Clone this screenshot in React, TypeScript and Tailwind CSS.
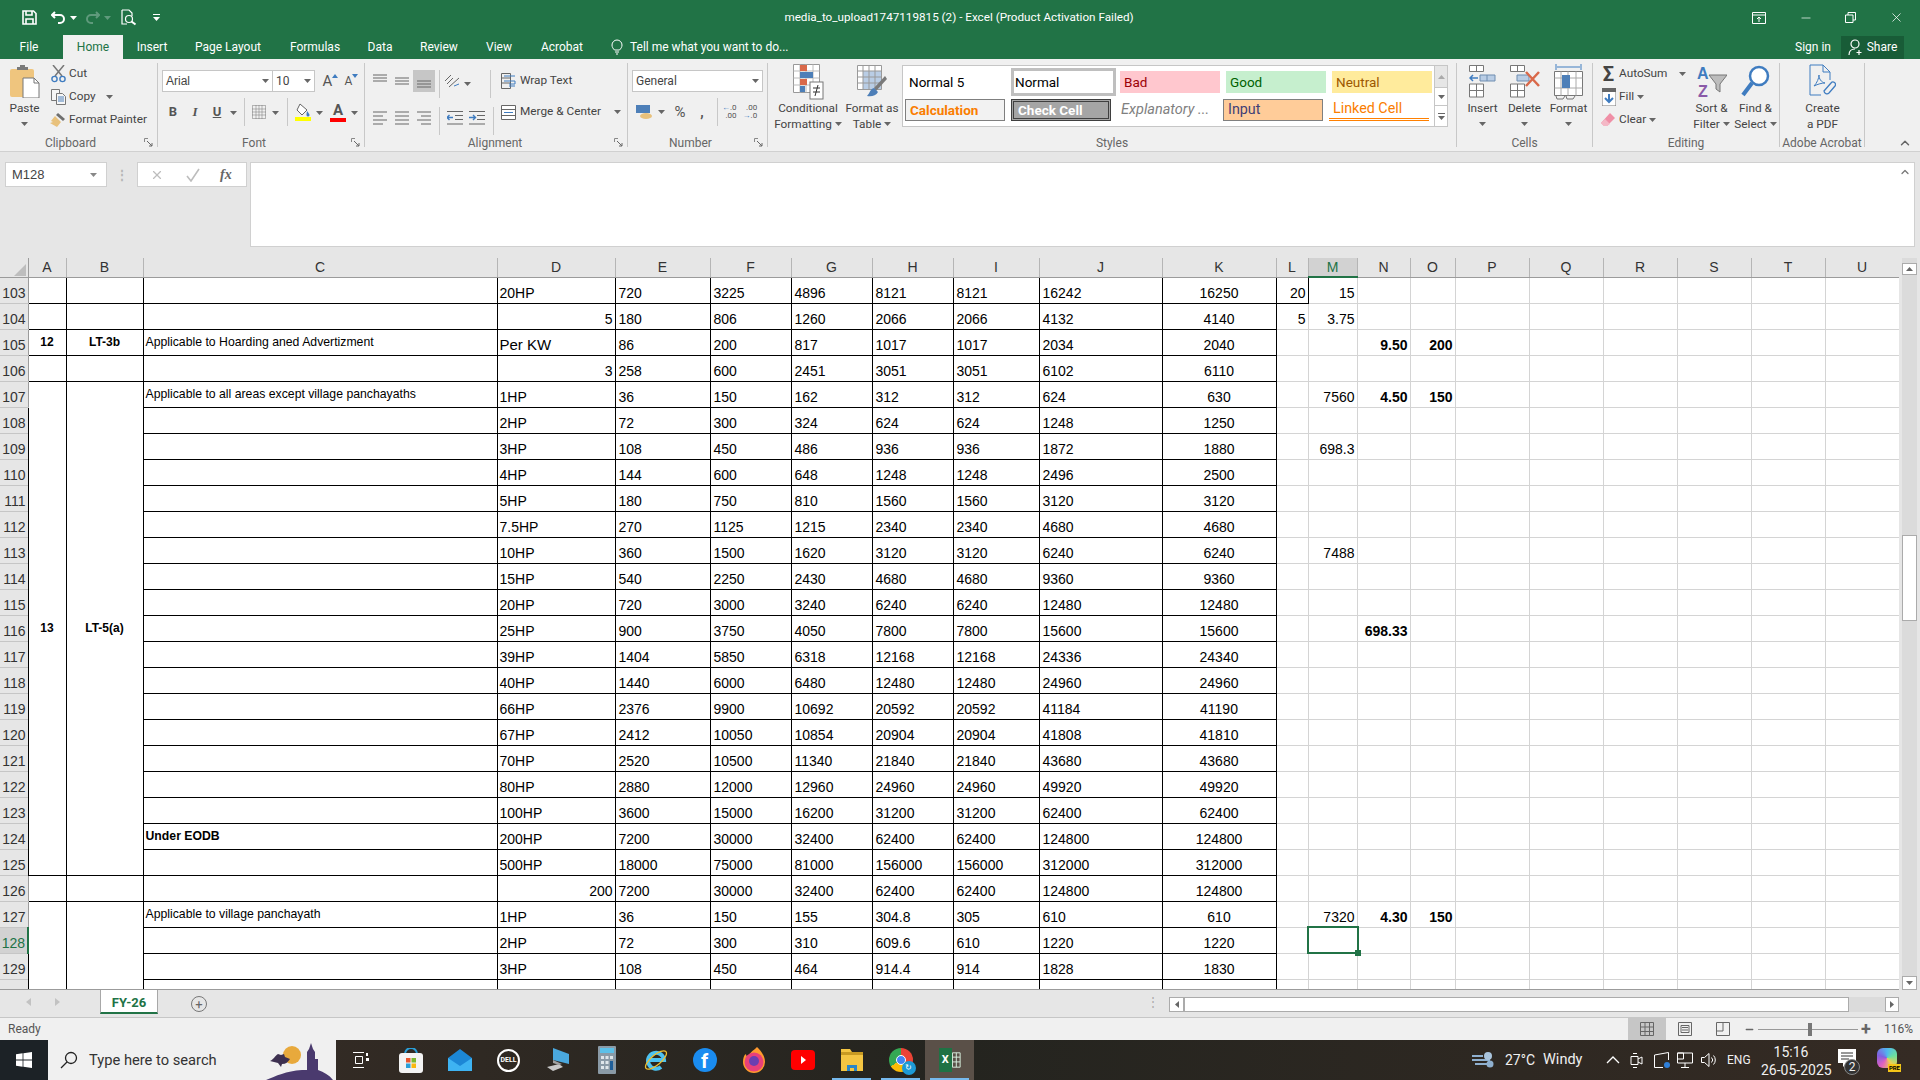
import { ReactNode } from "react";
import { ChevronUp, X, Minus } from "lucide-react";

type Row = { n: number; v: (string | number)[]; right?: boolean; perKw?: boolean };

const colW = [
  "w-[28px]", "w-[38px]", "w-[77px]", "w-[354px]", "w-[118px]", "w-[95px]", "w-[81px]", "w-[81px]",
  "w-[81px]", "w-[86px]", "w-[123px]", "w-[114px]", "w-[32px]", "w-[49px]", "w-[53px]", "w-[45px]",
  "w-[74px]", "w-[74px]", "w-[74px]", "w-[74px]", "w-[74px]", "w-[74px]",
];
const colNames = ["A", "B", "C", "D", "E", "F", "G", "H", "I", "J", "K", "L", "M", "N", "O", "P", "Q", "R", "S", "T", "U"];

const rows: Row[] = [
  { n: 103, v: ["20HP", 720, 3225, 4896, 8121, 8121, 16242, 16250, 20, 15] },
  { n: 104, v: [5, 180, 806, 1260, 2066, 2066, 4132, 4140, 5, "3.75"], right: true },
  { n: 105, v: ["Per KW", 86, 200, 817, 1017, 1017, 2034, 2040, "", "", "9.50", 200], perKw: true },
  { n: 106, v: [3, 258, 600, 2451, 3051, 3051, 6102, 6110], right: true },
  { n: 107, v: ["1HP", 36, 150, 162, 312, 312, 624, 630, "", 7560, "4.50", 150] },
  { n: 108, v: ["2HP", 72, 300, 324, 624, 624, 1248, 1250] },
  { n: 109, v: ["3HP", 108, 450, 486, 936, 936, 1872, 1880, "", "698.3"] },
  { n: 110, v: ["4HP", 144, 600, 648, 1248, 1248, 2496, 2500] },
  { n: 111, v: ["5HP", 180, 750, 810, 1560, 1560, 3120, 3120] },
  { n: 112, v: ["7.5HP", 270, 1125, 1215, 2340, 2340, 4680, 4680] },
  { n: 113, v: ["10HP", 360, 1500, 1620, 3120, 3120, 6240, 6240, "", 7488] },
  { n: 114, v: ["15HP", 540, 2250, 2430, 4680, 4680, 9360, 9360] },
  { n: 115, v: ["20HP", 720, 3000, 3240, 6240, 6240, 12480, 12480] },
  { n: 116, v: ["25HP", 900, 3750, 4050, 7800, 7800, 15600, 15600, "", "", "698.33"] },
  { n: 117, v: ["39HP", 1404, 5850, 6318, 12168, 12168, 24336, 24340] },
  { n: 118, v: ["40HP", 1440, 6000, 6480, 12480, 12480, 24960, 24960] },
  { n: 119, v: ["66HP", 2376, 9900, 10692, 20592, 20592, 41184, 41190] },
  { n: 120, v: ["67HP", 2412, 10050, 10854, 20904, 20904, 41808, 41810] },
  { n: 121, v: ["70HP", 2520, 10500, 11340, 21840, 21840, 43680, 43680] },
  { n: 122, v: ["80HP", 2880, 12000, 12960, 24960, 24960, 49920, 49920] },
  { n: 123, v: ["100HP", 3600, 15000, 16200, 31200, 31200, 62400, 62400] },
  { n: 124, v: ["200HP", 7200, 30000, 32400, 62400, 62400, 124800, 124800] },
  { n: 125, v: ["500HP", 18000, 75000, 81000, 156000, 156000, 312000, 312000] },
  { n: 126, v: [200, 7200, 30000, 32400, 62400, 62400, 124800, 124800], right: true },
  { n: 127, v: ["1HP", 36, 150, 155, "304.8", 305, 610, 610, "", 7320, "4.30", 150] },
  { n: 128, v: ["2HP", 72, 300, 310, "609.6", 610, 1220, 1220] },
  { n: 129, v: ["3HP", 108, 450, 464, "914.4", 914, 1828, 1830] },
  { n: 130, v: ["4HP", 144, 600, 619, "1219.2", 1219, 2438, 2440] },
];

const cText: Record<number, ReactNode> = {
  105: "Applicable to Hoarding aned Advertizment",
  107: "Applicable to all areas except village panchayaths",
  124: <b>Under EODB</b>,
  127: "Applicable to village panchayath",
};

const arial = "[font-family:'Liberation_Sans',sans-serif]";
const times = "[font-family:'Liberation_Serif',serif]";

const Caret = ({ c = "#666" }: { c?: string }) => (
  <svg width="7" height="4" viewBox="0 0 7 4" className="inline-block shrink-0">
    <path d="M0 0h7L3.5 4z" fill={c} />
  </svg>
);

const Launcher = () => (
  <svg width="9" height="9" viewBox="0 0 9 9" className="absolute right-[4px] bottom-[0px]">
    <path d="M.5 4V.5H4" fill="none" stroke="#888" />
    <path d="M3 3l5 5M8 5v3H5" fill="none" stroke="#666" />
  </svg>
);

const Group = ({ w, label, labelPad = "", launcher, children }: { w: string; label: string; labelPad?: string; launcher?: boolean; children: ReactNode }) => (
  <div className={`relative flex h-[84px] shrink-0 flex-col border-r border-[#c8c8c8] ${w}`}>
    <div className="flex h-[72px]">{children}</div>
    <div className={`h-[12px] text-center text-[12px] leading-[16px] text-[#666] ${labelPad}`}>{label}</div>
    {launcher && <Launcher />}
  </div>
);

const BigBtn = ({ w, icon, lines, caret }: { w: string; icon: ReactNode; lines: string[]; caret?: "inline" | "below" }) => (
  <div className={`flex shrink-0 flex-col items-center text-[11.8px] leading-[16px] text-[#444] ${w}`}>
    <div className="flex h-[37px] items-center justify-center">{icon}</div>
    {lines.map((l, i) => (
      <div key={l} className="flex items-center gap-[3px] whitespace-nowrap">
        {l}
        {caret === "inline" && i === lines.length - 1 && <Caret />}
      </div>
    ))}
    {caret === "below" && (
      <div className="flex h-[16px] items-center">
        <Caret />
      </div>
    )}
  </div>
);

const Lines = ({ rows: r }: { rows: [number, number][] }) => (
  <svg width="14" height="14" viewBox="0 0 14 14">
    {r.map(([y, x2], i) => (
      <line key={i} x1={x2 < 0 ? -x2 : 0} x2={x2 < 0 ? 14 : x2} y1={y} y2={y} stroke="#666" />
    ))}
  </svg>
);

const IconBtn = ({ w = "w-[22px]", active, children }: { w?: string; active?: boolean; children: ReactNode }) => (
  <div className={`flex h-[22px] shrink-0 items-center justify-center ${w} ${active ? "bg-[#c6c6c6]" : ""}`}>
    {children}
  </div>
);

const Sep = () => <div className="mx-[4px] h-[28px] w-px shrink-0 bg-[#c8c8c8]" />;

const Tab = ({ w, t, active }: { w: string; t: string; active?: boolean }) => (
  <div className={`flex h-[24px] items-center justify-center whitespace-nowrap text-[12px] ${w} ${active ? "bg-[#f0f0f0] text-[#217346]" : "text-white"}`}>
    {t}
  </div>
);

const Qat = () => (
  <div className="flex w-[200px] items-center pl-[22px] text-white">
    <svg width="15" height="15" viewBox="0 0 15 15" fill="none" stroke="#fff" strokeWidth="1.6">
      <path d="M1 1h10.5L14 3.5V14H1z" />
      <path d="M4 1v4h6V1M4 14V9h7v5" />
    </svg>
    <svg width="15" height="14" viewBox="0 0 15 14" fill="none" stroke="#fff" strokeWidth="2" className="ml-[14px]">
      <path d="M4 1L1 4l3 3M1 4h8a4 4 0 0 1 0 8H7" />
    </svg>
    <div className="ml-[4px]"><Caret c="#fff" /></div>
    <svg width="15" height="14" viewBox="0 0 15 14" fill="none" stroke="#5f9a7c" strokeWidth="2" className="ml-[8px]">
      <path d="M11 1l3 3-3 3M14 4H6a4 4 0 0 0 0 8h2" />
    </svg>
    <div className="ml-[4px]"><Caret c="#5f9a7c" /></div>
    <svg width="16" height="17" viewBox="0 0 16 17" fill="none" stroke="#fff" className="ml-[10px]" strokeWidth="1.2">
      <path d="M1 1h7l3 3v3M6 15H1V1" />
      <circle cx="8" cy="10" r="3.5" />
      <path d="M10.5 12.5l4 3" strokeWidth="2" />
    </svg>
    <svg width="7" height="7" viewBox="0 0 7 7" className="ml-[16px]">
      <path d="M0 0h7v1H0zM0 3h7L3.5 7z" fill="#fff" />
    </svg>
  </div>
);

const PasteIcon = () => (
  <svg width="30" height="33" viewBox="0 0 30 33">
    <rect x="0" y="4" width="24" height="28" rx="2" fill="#efc57e" />
    <path d="M7 5V2h3V0h5v2h3v3z" fill="#7a7a7a" />
    <path d="M13 13h11l5 5v15H13z" fill="#fff" stroke="#777" />
    <path d="M24 13v5h5" fill="none" stroke="#777" />
  </svg>
);
const CutIcon = () => (
  <svg width="15" height="18" viewBox="0 0 15 18" fill="none">
    <path d="M2 0l9 11M13 0L4 11" stroke="#777" strokeWidth="1.5" />
    <circle cx="3.5" cy="14" r="2.6" stroke="#3f7cc0" strokeWidth="1.4" />
    <circle cx="11.5" cy="14" r="2.6" stroke="#3f7cc0" strokeWidth="1.4" />
  </svg>
);
const CopyIcon = () => (
  <svg width="16" height="16" viewBox="0 0 16 16" fill="#f6f6f6" stroke="#777">
    <path d="M.5.5h8v11h-8z" />
    <path d="M5.5 4.5h6l3 3v8h-9z" />
    <path d="M7 8h6M7 10h6M7 12h6" stroke="#4d7fb8" />
  </svg>
);
const PainterIcon = () => (
  <svg width="17" height="17" viewBox="0 0 17 17">
    <path d="M8 2l7 6-2 2-7-6z" fill="#6f6f6f" />
    <path d="M5 5l6 6-4 5-7-4 3-1-2-1z" fill="#e8c17c" />
  </svg>
);
const GridIcon = () => (
  <svg width="14" height="14" viewBox="0 0 14 14" fill="none" stroke="#777" strokeDasharray="1 1">
    <path d="M.5.5h13v13H.5zM.5 7h13M7 .5v13M4 .5v13M10 .5v13M.5 4h13M.5 10h13" />
  </svg>
);
const FillIcon = () => (
  <svg width="16" height="19" viewBox="0 0 16 19">
    <path d="M5 1l7 6-5 5-5-5z" fill="#fff" stroke="#666" />
    <path d="M12 8c1.5 2 2.5 3 2.5 4a1.5 1.5 0 0 1-3 0c0-1 .2-2 .5-4z" fill="#3f7cc0" />
    <rect x="0" y="14" width="16" height="4" fill="#ffff00" />
  </svg>
);
const OrientIcon = () => (
  <svg width="16" height="14" viewBox="0 0 16 14" fill="none" stroke="#666">
    <path d="M1 7l6-6M3 10l6-6M5 13L15 4" />
    <path d="M10 12l5-2" stroke="#3f7cc0" />
  </svg>
);
const WrapIcon = () => (
  <svg width="15" height="16" viewBox="0 0 15 16" fill="none" stroke="#666">
    <path d="M.5.5h9v15h-9zM.5 5h9M.5 10h9" />
    <path d="M3 3h11M3 8h11v3H8M8 13h6" stroke="#3f7cc0" />
  </svg>
);
const MergeIcon = () => (
  <svg width="15" height="15" viewBox="0 0 15 15" fill="#fff" stroke="#666">
    <path d="M.5.5h14v14H.5zM.5 4.5h14M.5 10.5h14" />
    <path d="M3 7.5h9" stroke="#3f7cc0" />
  </svg>
);
const IndentIcon = ({ flip }: { flip?: boolean }) => (
  <svg width="16" height="14" viewBox="0 0 16 14" fill="none" stroke="#666">
    <path d="M0 .5h16M8 4.5h8M8 8.5h8M0 13h16" />
    {flip ? <path d="M0 6.5h6M4 4l2.5 2.5L4 9" stroke="#3f7cc0" strokeWidth="1.4" /> : <path d="M6 6.5H0M2.5 4L0 6.5 2.5 9" stroke="#3f7cc0" strokeWidth="1.4" />}
  </svg>
);
const CondIcon = () => (
  <svg width="31" height="36" viewBox="0 0 31 36">
    <path d="M.5.5h26v28H.5z" fill="#fff" stroke="#999" />
    <path d="M.5 7h26M.5 14h26M.5 21h26M7 .5v28M13 .5v28M20 .5v28" stroke="#bbb" />
    <rect x="7" y="1" width="7" height="6" fill="#d9694a" />
    <rect x="7" y="8" width="13" height="6" fill="#4d7fb8" />
    <rect x="7" y="15" width="7" height="6" fill="#d9694a" />
    <rect x="7" y="22" width="5" height="6" fill="#4d7fb8" />
    <rect x="17" y="18" width="13" height="17" fill="#fff" stroke="#777" />
    <path d="M20 24h7M20 28h7M25 21l-3 11" stroke="#333" fill="none" />
  </svg>
);
const TableIcon = () => (
  <svg width="30" height="34" viewBox="0 0 30 34">
    <path d="M.5.5h24v24H.5z" fill="#fff" stroke="#999" />
    <rect x="6" y="6" width="18" height="18" fill="#b9cde5" />
    <path d="M.5 6h24M.5 12h24M.5 18h24M6 .5v24M12 .5v24M18 .5v24" stroke="#999" />
    <path d="M28 11L17 23l2 3 11-12z" fill="#7a7a7a" />
    <path d="M17 23c-4 1-4 5-7 8 4 1 9 0 11-4z" fill="#4d7fb8" />
  </svg>
);
const InsertIcon = () => (
  <svg width="27" height="33" viewBox="0 0 27 33" fill="#fff" stroke="#777">
    <path d="M.5.5h14v6H.5zM7.5.5v6M.5 19h14v13H.5zM7.5 19v13M.5 25.5h14" />
    <path d="M11 10h15v6H11z" fill="#b9cde5" stroke="#6f8db0" />
    <path d="M18 10v6" stroke="#6f8db0" />
    <path d="M9 13H1M4 10l-3 3 3 3" fill="none" stroke="#3f7cc0" strokeWidth="1.5" />
  </svg>
);
const DeleteIcon = () => (
  <svg width="30" height="33" viewBox="0 0 30 33" fill="#fff" stroke="#777">
    <path d="M.5.5h14v6H.5zM7.5.5v6M.5 19h14v13H.5zM7.5 19v13M.5 25.5h14" />
    <path d="M7 10h12v6H7z" fill="#b9cde5" stroke="#6f8db0" />
    <path d="M16 7l13 14M29 7L16 21" stroke="#d9694a" strokeWidth="2.5" fill="none" />
  </svg>
);
const FormatIcon = () => (
  <svg width="29" height="36" viewBox="0 0 29 36" fill="none" stroke="#777">
    <path d="M2 0v6M27 0v6M3 3h23" stroke="#3f7cc0" />
    <path d="M.5 7.5h28v24H.5z" fill="#fff" />
    <path d="M.5 14h28M.5 24h28M7 7.5v24M14 7.5v24M22 7.5v24" stroke="#aaa" />
    <rect x="8" y="11" width="8" height="13" fill="#4d7fb8" stroke="none" />
    <path d="M2 32l1 3h6l2-3M12 32l1 3h6l2-3" />
  </svg>
);
const SortIcon = () => (
  <svg width="30" height="34" viewBox="0 0 30 34">
    <path d="M12 10h18l-7 9v8l-4-3v-5z" fill="#bdbdbd" stroke="#777" />
    <text x="0" y="14" fontSize="16" fontWeight="700" fill="#3f7cc0" fontFamily="Liberation Sans, sans-serif">A</text>
    <text x="1" y="32" fontSize="16" fontWeight="700" fill="#8a5aa8" fontFamily="Liberation Sans, sans-serif">Z</text>
  </svg>
);
const FindIcon = () => (
  <svg width="29" height="33" viewBox="0 0 29 33" fill="none">
    <circle cx="18" cy="11" r="9" stroke="#3f7cc0" strokeWidth="2.5" fill="#fff" />
    <path d="M11 18L2 30" stroke="#3f7cc0" strokeWidth="4" />
  </svg>
);
const PdfIcon = () => (
  <svg width="27" height="35" viewBox="0 0 27 35" fill="none" stroke="#3f7cc0">
    <path d="M1 1h13l7 7v8M1 1v30h11M14 1v7h7" />
    <path d="M5 22c3-3 5-8 5-11 0 4 2 7 6 8-3 0-7 1-11 3z" />
    <path d="M15 27l7-8a2.5 2.5 0 0 1 4 3l-6 7a3 3 0 0 1-5-2z" strokeWidth="1.3" />
  </svg>
);

const SmallCmd = ({ icon, t, caret, gap = "ml-[3px]" }: { icon: ReactNode; t: string; caret?: boolean; gap?: string }) => (
  <div className="flex h-[23px] items-center whitespace-nowrap text-[11.8px] text-[#444]">
    <div className="flex w-[19px] shrink-0 items-center justify-center">{icon}</div>
    <span className="ml-[1px]">{t}</span>
    {caret && <span className={`flex ${gap}`}><Caret /></span>}
  </div>
);

const StyleCell = ({ className, size = "text-[13.5px]", children }: { className: string; size?: string; children: ReactNode }) => (
  <div className={`flex h-[22px] w-[100px] shrink-0 items-center overflow-hidden whitespace-nowrap pl-[4px] ${size} ${className}`}>{children}</div>
);

const Ribbon = () => (
  <div className="flex h-[93px] shrink-0 border-b border-[#d0d0d0] bg-[#f0f0f0] pt-[4px]">
    <Group w="w-[158px]" label="Clipboard" labelPad="pr-[16px]" launcher>
      <div className="w-[49px] pl-[1px]">
        <BigBtn w="w-[47px]" icon={<PasteIcon />} lines={["Paste"]} caret="below" />
      </div>
      <div className="-mt-[1px] flex flex-col">
        <SmallCmd icon={<CutIcon />} t="Cut" />
        <SmallCmd icon={<CopyIcon />} t="Copy" caret gap="ml-[10px]" />
        <SmallCmd icon={<PainterIcon />} t="Format Painter" />
      </div>
    </Group>

    <Group w="w-[207px]" label="Font" labelPad="pr-[14px]" launcher>
      <div className="flex flex-col gap-[9px] pl-[4px] pt-[7px]">
        <div className="flex">
          <div className={`flex h-[22px] w-[111px] items-center justify-between border border-[#c6c6c6] bg-white px-[3px] text-[12px] text-[#444] ${arial}`}>
            Arial <Caret />
          </div>
          <div className="flex h-[22px] w-[42px] items-center justify-between border border-l-0 border-[#c6c6c6] bg-white px-[3px] text-[12px] text-[#444]">
            10 <Caret />
          </div>
          <div className="ml-[5px] flex h-[22px] w-[21px] items-center justify-center text-[15px] text-[#555]">
            A<svg width="6" height="4" viewBox="0 0 6 4" className="mb-[10px]"><path d="M0 4h6L3 0z" fill="#3f7cc0" /></svg>
          </div>
          <div className="flex h-[22px] w-[21px] items-center justify-center text-[12px] text-[#555]">
            A<svg width="6" height="4" viewBox="0 0 6 4" className="mb-[10px]"><path d="M0 0h6L3 4z" fill="#3f7cc0" /></svg>
          </div>
        </div>
        <div className="flex h-[22px] items-center text-[13px] text-[#555]">
          <IconBtn><b>B</b></IconBtn>
          <IconBtn><i className={times}><b>I</b></i></IconBtn>
          <IconBtn><b className="underline">U</b></IconBtn>
          <div className="ml-[2px]"><Caret /></div>
          <div className="ml-[3px]"><Sep /></div>
          <IconBtn w="w-[20px]"><GridIcon /></IconBtn>
          <div className="ml-[3px]"><Caret /></div>
          <div className="ml-[4px]"><Sep /></div>
          <IconBtn><FillIcon /></IconBtn>
          <div className="ml-[2px]"><Caret /></div>
          <div className="ml-[6px] flex h-[22px] w-[18px] flex-col items-center justify-center">
            <b className="text-[15px] leading-[15px]">A</b>
            <div className="h-[4px] w-[16px] bg-[#ff0000]" />
          </div>
          <div className="ml-[4px]"><Caret /></div>
        </div>
      </div>
    </Group>

    <Group w="w-[263px]" label="Alignment" labelPad="pr-[2px]" launcher>
      <div className="flex pl-[4px] pt-[7px]">
        <div className="flex flex-col gap-[9px]">
          <div className="flex">
            <IconBtn><Lines rows={[[1, 14], [4, 14], [7, 14]]} /></IconBtn>
            <IconBtn><Lines rows={[[4, 14], [7, 14], [10, 14]]} /></IconBtn>
            <IconBtn active><Lines rows={[[7, 14], [10, 14], [13, 14]]} /></IconBtn>
            <Sep />
            <IconBtn w="w-[16px]"><OrientIcon /></IconBtn>
            <div className="flex items-center pl-[4px]"><Caret /></div>
            <div className="ml-[15px]"><Sep /></div>
          </div>
          <div className="flex">
            <IconBtn><Lines rows={[[1, 14], [5, 10], [9, 14], [13, 10]]} /></IconBtn>
            <IconBtn><Lines rows={[[1, 14], [5, 14], [9, 14], [13, 14]]} /></IconBtn>
            <IconBtn><Lines rows={[[1, 14], [5, -4], [9, 14], [13, -4]]} /></IconBtn>
            <Sep />
            <IconBtn><IndentIcon /></IconBtn>
            <IconBtn><IndentIcon flip /></IconBtn>
            <div className="ml-[1px]"><Sep /></div>
          </div>
        </div>
        <div className="flex flex-col gap-[9px] pl-[3px] text-[11.8px] text-[#444]">
          <div className="flex h-[22px] items-center gap-[4px]"><WrapIcon />Wrap Text</div>
          <div className="flex h-[22px] items-center gap-[4px]"><MergeIcon />Merge &amp; Center<span className="ml-[9px] flex"><Caret /></span></div>
        </div>
      </div>
    </Group>

    <Group w="w-[140px]" label="Number" labelPad="pr-[14px]" launcher>
      <div className="flex flex-col gap-[9px] pl-[4px] pt-[7px]">
        <div className="flex h-[22px] w-[131px] items-center justify-between border border-[#c6c6c6] bg-white px-[3px] text-[12px] text-[#444]">
          General <Caret />
        </div>
        <div className="flex h-[22px] items-center text-[#555]">
          <div className="flex w-[26px] justify-center">
            <svg width="18" height="15" viewBox="0 0 18 15"><rect width="14" height="8" fill="#4d7fb8" /><ellipse cx="10" cy="11" rx="6" ry="3" fill="#e8c17c" /></svg>
          </div>
          <Caret />
          <div className="w-[30px] text-center text-[15px]">%</div>
          <b className="w-[14px] text-center text-[14px]">,</b>
          <div className="ml-[4px]"><Sep /></div>
          <div className="flex gap-[6px] text-[8px] leading-[8px] text-[#555]">
            <div className="text-right"><span className="text-[#3f7cc0]">←</span>.0<br />.00</div>
            <div className="text-right">.00<br /><span className="text-[#3f7cc0]">→</span>.0</div>
          </div>
        </div>
      </div>
    </Group>

    <Group w="w-[689px]" label="Styles">
      <div className="ml-[7px]"><BigBtn w="w-[66px]" icon={<CondIcon />} lines={["Conditional", "Formatting"]} caret="inline" /></div>
      <div className="ml-[1px]"><BigBtn w="w-[60px]" icon={<TableIcon />} lines={["Format as", "Table"]} caret="inline" /></div>
      <div className="mt-[2px] flex h-[62px] w-[546px] border border-[#c6c6c6] bg-white">
        <div className="flex w-[532px] flex-col gap-[6px] pl-[2px] pt-[5px]">
          <div className="flex gap-[6px]">
            <StyleCell className="text-black">Normal 5</StyleCell>
            <div className="-mb-[3px] -mt-[3px] flex h-[28px] w-[105px] shrink-0 items-center border-[3px] border-[#bfbfbf] pl-[1px] text-[13.5px] text-black">Normal</div>
            <StyleCell className="-ml-[2px] bg-[#ffc7ce] text-[#9c0006]">Bad</StyleCell>
            <StyleCell className="bg-[#c6efce] text-[#006100]">Good</StyleCell>
            <StyleCell className="bg-[#ffeb9c] text-[#9c5700]">Neutral</StyleCell>
          </div>
          <div className="flex gap-[6px]">
            <StyleCell className="border border-[#7f7f7f] bg-[#f2f2f2] font-bold text-[#fa7d00]">Calculation</StyleCell>
            <StyleCell className="border-[3px] border-double border-[#3f3f3f] bg-[#a5a5a5] font-bold text-white">Check Cell</StyleCell>
            <StyleCell size="text-[14.5px]" className="italic text-[#7f7f7f]">Explanatory ...</StyleCell>
            <StyleCell size="text-[14.3px]" className="border border-[#7f7f7f] bg-[#ffcc99] text-[#3f3f76]">Input</StyleCell>
            <StyleCell size="text-[14.3px]" className="border-b-[3px] border-double border-[#ff8001] text-[#fa7d00]">Linked Cell</StyleCell>
          </div>
        </div>
        <div className="flex w-[13px] flex-col border-l border-[#c6c6c6]">
          <div className="flex h-[21px] items-center justify-center bg-[#e6e6e6]"><svg width="7" height="4" viewBox="0 0 7 4"><path d="M0 4h7L3.5 0z" fill="#aaa" /></svg></div>
          <div className="flex h-[19px] items-center justify-center border-y border-[#c6c6c6]"><Caret /></div>
          <div className="flex flex-1 items-center justify-center"><svg width="7" height="7" viewBox="0 0 7 7"><path d="M0 0h7v1H0zM0 3h7L3.5 7z" fill="#666" /></svg></div>
        </div>
      </div>
    </Group>

    <Group w="w-[136px]" label="Cells">
      <div className="ml-[4px]"><BigBtn w="w-[43px]" icon={<InsertIcon />} lines={["Insert"]} caret="below" /></div>
      <BigBtn w="w-[41px]" icon={<DeleteIcon />} lines={["Delete"]} caret="below" />
      <div className="ml-[2px]"><BigBtn w="w-[43px]" icon={<FormatIcon />} lines={["Format"]} caret="below" /></div>
    </Group>

    <Group w="w-[187px]" label="Editing">
      <div className="-mt-[1px] flex w-[95px] flex-col pl-[6px]">
        <SmallCmd
          icon={<span className="text-[20px] font-bold leading-[20px] text-[#444]">Σ</span>}
          t="AutoSum"
          caret
          gap="ml-[12px]"
        />
        <SmallCmd
          icon={<svg width="14" height="18" viewBox="0 0 14 18"><rect width="14" height="18" fill="#fff" stroke="#777" /><rect width="14" height="4" fill="#666" /><path d="M7 6v8M3 10l4 4 4-4" stroke="#3f7cc0" strokeWidth="2" fill="none" /></svg>}
          t="Fill"
          caret
        />
        <SmallCmd
          icon={<svg width="15" height="15" viewBox="0 0 15 15"><path d="M9 1l5 5-8 8H3L0 11z" fill="#ef8fa6" /><path d="M0 11l4-4 5 5-3 2H3z" fill="#f4b8c6" /></svg>}
          t="Clear"
          caret
        />
      </div>
      <div className="ml-[3px]"><BigBtn w="w-[41px]" icon={<SortIcon />} lines={["Sort &", "Filter"]} caret="inline" /></div>
      <div className="ml-[2px]"><BigBtn w="w-[43px]" icon={<FindIcon />} lines={["Find &", "Select"]} caret="inline" /></div>
    </Group>

    <Group w="w-[85px]" label="Adobe Acrobat">
      <BigBtn w="w-[85px]" icon={<PdfIcon />} lines={["Create", "a PDF"]} />
    </Group>

    <div className="flex flex-1 items-end justify-end pb-[1px] pr-[8px]">
      <ChevronUp size={14} strokeWidth={2.5} color="#666" />
    </div>
  </div>
);

const FormulaBar = () => (
  <div className="flex h-[106px] shrink-0 bg-[#e6e6e6] pl-[5px] pt-[10px]">
    <div className={`flex h-[25px] w-[102px] items-center justify-between border border-[#d0d0d0] bg-white pl-[6px] pr-[9px] text-[13px] text-[#444] ${arial}`}>
      M128 <Caret c="#888" />
    </div>
    <div className="flex h-[25px] w-[30px] items-center justify-center text-[12px] font-bold tracking-tighter text-[#b5b5b5]">⋮</div>
    <div className="flex h-[25px] w-[110px] items-center border border-[#d0d0d0] bg-white pl-[12px] text-[#bdbdbd]">
      <X size={14} />
      <svg width="14" height="14" viewBox="0 0 14 14" className="ml-[22px]" fill="none" stroke="#bdbdbd" strokeWidth="1.6"><path d="M1 8l4 5 8-12" /></svg>
      <i className={`ml-[20px] text-[14px] font-bold text-[#666] ${times}`}>fx</i>
    </div>
    <div className="ml-[3px] flex h-[85px] w-[1665px] justify-end border border-[#d0d0d0] bg-white pr-[3px] pt-[3px]">
      <ChevronUp size={12} color="#777" strokeWidth={2.5} />
    </div>
  </div>
);

const SheetRow = ({ r }: { r: Row }) => {
  const black = "border border-black";
  const light = "border border-[#d4d4d4]";
  const num = "px-[2px] py-0 pb-[2px] align-bottom text-[14px] leading-[16px] text-right text-black whitespace-nowrap";
  const vals = r.v;
  const merged107 = r.n >= 108 && r.n <= 125;
  const merged127 = r.n >= 128;
  return (
    <tr className="h-[26px]">
      <td className={`border-b border-r border-b-[#c6c6c6] border-r-[#9b9b9b] p-0 pb-[2px] pr-[2px] text-right align-bottom text-[14px] leading-[16px] ${r.n === 128 ? "border-r-2 border-r-[#217346] bg-[#d2d2d2] text-[#217346]" : "bg-[#e6e6e6] text-[#333]"}`}>
        {r.n}
      </td>
      {r.n === 107 || r.n === 127 ? (
        <>
          <td rowSpan={r.n === 107 ? 19 : 4} className={`${black} p-0 text-center text-[12px] font-bold`}>{r.n === 107 ? "13" : ""}</td>
          <td rowSpan={r.n === 107 ? 19 : 4} className={`${black} p-0 text-center text-[12px] font-bold`}>{r.n === 107 ? "LT-5(a)" : ""}</td>
        </>
      ) : merged107 || merged127 ? null : (
        <>
          <td className={`${black} p-0 text-center text-[12px] font-bold`}>{r.n === 105 ? "12" : ""}</td>
          <td className={`${black} p-0 text-center text-[12px] font-bold`}>{r.n === 105 ? "LT-3b" : ""}</td>
        </>
      )}
      <td className={`${black} overflow-hidden whitespace-nowrap px-[2px] py-0 text-[12.25px] text-black`}>{cText[r.n]}</td>
      <td className={`${black} overflow-hidden whitespace-nowrap py-0 pb-[2px] align-bottom leading-[16px] text-black ${r.perKw ? "text-[15px]" : "text-[14px]"} ${r.right ? "pr-[2px] text-right" : "pl-[2px]"}`}>
        {vals[0]}
      </td>
      {[1, 2, 3, 4, 5, 6].map((i) => (
        <td key={i} className={`${black} overflow-hidden whitespace-nowrap py-0 pb-[2px] pl-[3px] align-bottom text-[14px] leading-[16px] text-black`}>
          {vals[i]}
        </td>
      ))}
      <td className={`${black} overflow-hidden whitespace-nowrap p-0 pb-[2px] text-center align-bottom text-[14px] leading-[16px] text-black`}>{vals[7]}</td>
      <td className={`${r.n === 103 ? black : light} ${num}`}>{vals[8]}</td>
      <td className={`${light} ${num} relative`}>
        {vals[9]}
        {r.n === 128 && (
          <div className="absolute -left-[2px] -top-[2px] h-[28px] w-[52px] border-2 border-[#217346]">
            <div className="absolute -bottom-[4px] -right-[4px] h-[6px] w-[6px] bg-[#217346]" />
          </div>
        )}
      </td>
      <td className={`${light} ${num} font-bold`}>{vals[10]}</td>
      <td className={`${light} ${num} font-bold`}>{vals[11]}</td>
      {[0, 1, 2, 3, 4, 5].map((i) => (
        <td key={i} className={light} />
      ))}
    </tr>
  );
};

const Sheet = () => (
  <div className="flex h-[732px] shrink-0 overflow-hidden bg-[#e6e6e6]">
    <div className="h-[732px] w-[1899px] shrink-0 overflow-hidden border-b border-[#9b9b9b]">
      <table className={`w-[1899px] table-fixed border-collapse bg-white ${arial}`}>
        <colgroup>
          {colW.map((w, i) => (
            <col key={i} className={w} />
          ))}
        </colgroup>
        <thead>
          <tr className="h-[19px]">
            <th className="border-b border-r border-[#9b9b9b] bg-[#e6e6e6] p-0">
              <svg width="12" height="12" viewBox="0 0 12 12" className="ml-[14px] mt-[5px]"><path d="M12 0v12H0z" fill="#bdbdbd" /></svg>
            </th>
            {colNames.map((c) => (
              <th
                key={c}
                className={`p-0 text-center text-[14px] font-normal leading-[16px] ${
                  c === "M"
                    ? "border-b-2 border-r border-b-[#217346] border-r-[#b5b5b5] bg-[#d2d2d2] text-[#217346]"
                    : "border-b border-r border-b-[#9b9b9b] border-r-[#b5b5b5] bg-[#e6e6e6] text-[#333]"
                }`}
              >
                {c}
              </th>
            ))}
          </tr>
        </thead>
        <tbody>
          {rows.map((r) => (
            <SheetRow key={r.n} r={r} />
          ))}
        </tbody>
      </table>
    </div>
    <div className="ml-[3px] flex w-[15px] shrink-0 flex-col bg-[#dbdbdb] pt-[5px]">
      <div className="flex h-[12px] items-center justify-center border border-[#ababab] bg-white"><svg width="7" height="4" viewBox="0 0 7 4"><path d="M0 4h7L3.5 0z" fill="#666" /></svg></div>
      <div className="mt-[260px] h-[86px] border border-[#ababab] bg-white" />
      <div className="mt-[355px] flex h-[14px] items-center justify-center border border-[#ababab] bg-white"><Caret /></div>
    </div>
  </div>
);

const SheetTabs = () => (
  <div className="flex h-[28px] shrink-0 items-start border-b border-[#c6c6c6] bg-[#e6e6e6]">
    <div className="flex h-[24px] w-[100px] items-center pl-[26px] text-[#bdbdbd]">
      <svg width="5" height="8" viewBox="0 0 5 8"><path d="M5 0v8L0 4z" fill="#c2c2c2" /></svg>
      <svg width="5" height="8" viewBox="0 0 5 8" className="ml-[24px]"><path d="M0 0v8l5-4z" fill="#c2c2c2" /></svg>
    </div>
    <div className="flex h-[24px] w-[58px] items-center justify-center border-x border-b-2 border-x-[#a8a8a8] border-b-[#217346] bg-white pt-[3px] text-[13px] font-bold text-[#217346]">
      FY-26
    </div>
    <div className="ml-[33px] mt-[6px] flex h-[16px] w-[16px] items-center justify-center rounded-full border border-[#777] text-[13px] leading-[13px] text-[#666]">+</div>
    <div className="ml-[940px] mt-[5px] text-[12px] leading-[14px] text-[#aaa]">⋮</div>
    <div className="ml-[10px] mt-[7px] flex h-[15px] w-[730px]">
      <div className="flex h-[15px] w-[15px] items-center justify-center border border-[#ababab] bg-white">
        <svg width="4" height="7" viewBox="0 0 4 7"><path d="M4 0v7L0 3.5z" fill="#666" /></svg>
      </div>
      <div className="h-[15px] w-[665px] border border-[#ababab] bg-white" />
      <div className="w-[36px] bg-[#dbdbdb]" />
      <div className="flex h-[15px] w-[14px] items-center justify-center border border-[#ababab] bg-white">
        <svg width="4" height="7" viewBox="0 0 4 7"><path d="M0 0v7l4-3.5z" fill="#666" /></svg>
      </div>
    </div>
  </div>
);

const StatusBar = () => (
  <div className="flex h-[22px] shrink-0 items-center bg-[#f0f0f0] pl-[8px] text-[12px] text-[#555]">
    <span>Ready</span>
    <div className="ml-auto flex h-[22px] w-[38px] items-center justify-center bg-[#c6c6c6]">
      <svg width="14" height="14" viewBox="0 0 14 14" fill="none" stroke="#666"><path d="M.5.5h13v13H.5zM.5 5h13M.5 9.500h13M5 .5v13M9.500.5v13" /></svg>
    </div>
    <div className="flex h-[22px] w-[38px] items-center justify-center">
      <svg width="14" height="14" viewBox="0 0 14 14" fill="none" stroke="#666"><path d="M.5.5h13v13H.5zM3 3.500h8v7H3zM4 5.500h6M4 8h6" /></svg>
    </div>
    <div className="flex h-[22px] w-[38px] items-center justify-center">
      <svg width="14" height="14" viewBox="0 0 14 14" fill="none" stroke="#666"><path d="M.5.5h13v13H.5zM.5 9h6.500V.5" /></svg>
    </div>
    <Minus size={11} strokeWidth={3} color="#666" className="ml-[2px]" />
    <div className="relative ml-[3px] h-px w-[100px] bg-[#999]">
      <div className="absolute left-[50px] top-[-6px] h-[13px] w-[4px] bg-[#777]" />
    </div>
    <div className="w-[16px] text-center text-[18px] font-bold leading-[18px] text-[#666]">+</div>
    <div className="ml-[10px] w-[36px] pr-[8px] text-right">116%</div>
  </div>
);

const Slot = ({ w = "w-[49px]", children, active, line }: { w?: string; children: ReactNode; active?: boolean; line?: boolean }) => (
  <div className={`relative flex h-[40px] shrink-0 items-center justify-center ${w} ${active ? "bg-[#5a5048]" : ""}`}>
    {children}
    {line && <div className="absolute bottom-0 left-[5px] right-[5px] h-[2px] bg-[#76b9ed]" />}
  </div>
);

const Taskbar = () => (
  <div className="flex h-[40px] shrink-0 items-center bg-linear-to-r from-[#3a2e27] via-[#24241f] to-[#352b24] text-white">
    <div className="flex h-[40px] w-[48px] items-center justify-center bg-[#1c2226]">
      <svg width="16" height="16" viewBox="0 0 16 16" fill="#fff"><path d="M0 2.200l6.600-.9v6.300H0zM7.400 1.200L16 0v7.600H7.400zM0 8.400h6.600v6.300L0 13.800zM7.400 8.400H16V16l-8.600-1.200z" /></svg>
    </div>
    <div className="flex h-[40px] w-[288px] items-center overflow-hidden bg-[#f0f0f0] pl-[12px] text-[14.7px] text-[#333]">
      <svg width="18" height="18" viewBox="0 0 18 18" fill="none" stroke="#222" strokeWidth="1.3"><circle cx="11" cy="7" r="5.500" /><path d="M7 11l-6 6" /></svg>
      <span className="ml-[11px] whitespace-nowrap">Type here to search</span>
      <svg width="74" height="40" viewBox="0 0 74 40" className="ml-auto shrink-0">
        <circle cx="30" cy="15" r="9" fill="#e8a93c" />
        <path d="M8 21c3-1 5-5 8-7l3 1 3-1 1 3 5 2c-2 3-4 5-8 5l-1 3-3-4z" fill="#3d3050" />
        <path d="M4 40c10-4 20-9 36-10h5V12l2-3 2-6 2 6 2 3v7h3v11c6 2 11 5 15 10z" fill="#4a3a6e" />
      </svg>
    </div>
    <Slot w="w-[50px]">
      <svg width="16" height="16" viewBox="0 0 16 16" fill="none" stroke="#fff"><path d="M0 .5h11M0 15.500h11M2.500 4.500h7v7h-7z" /><rect x="13" y="6" width="3" height="3" fill="#fff" stroke="none" /><rect x="13" y="1" width="2" height="3" fill="#fff" stroke="none" /></svg>
    </Slot>
    <Slot>
      <svg width="24" height="25" viewBox="0 0 24 25"><path d="M6 6a6 6 0 0 1 12 0" fill="none" stroke="#2a9fd8" strokeWidth="2" /><rect y="5" width="24" height="20" rx="3" fill="#f3f3f3" /><rect x="7" y="10" width="4.500" height="4.500" fill="#e8552d" /><rect x="12.500" y="10" width="4.500" height="4.500" fill="#7cb82f" /><rect x="7" y="15.500" width="4.500" height="4.500" fill="#2a9fd8" /><rect x="12.500" y="15.500" width="4.500" height="4.500" fill="#fbb80f" /></svg>
    </Slot>
    <Slot>
      <svg width="24" height="22" viewBox="0 0 24 22"><path d="M12 0l12 9v13H0V9z" fill="#1c87d6" /><path d="M0 9l12 8 12-8v13H0z" fill="#3eb3f2" /></svg>
    </Slot>
    <Slot>
      <div className="flex h-[23px] w-[23px] items-center justify-center rounded-full border-2 border-white text-[7px] font-bold">DELL</div>
    </Slot>
    <Slot>
      <svg width="24" height="24" viewBox="0 0 24 24"><path d="M7 0l16 6v10L7 12z" fill="#4aa8de" /><path d="M1 19l12-3 4 3-10 4z" fill="#c8c8c8" /><path d="M7 12l9 4-3 1-6-2z" fill="#a0a0a0" /></svg>
    </Slot>
    <Slot>
      <svg width="18" height="28" viewBox="0 0 18 28"><rect width="18" height="28" rx="1" fill="#8a9aa6" /><rect x="2" y="2" width="14" height="5" fill="#5cc0e8" /><path d="M3 10h3v3H3zM7.500 10h3v3h-3zM12 10h3v3h-3zM3 15h3v3H3zM7.500 15h3v3h-3zM3 20h3v3H3zM7.500 20h3v3h-3z" fill="#dfe6ea" /><rect x="12" y="15" width="3" height="9" fill="#1f5f9a" /></svg>
    </Slot>
    <Slot>
      <svg width="26" height="26" viewBox="0 0 26 26" fill="none">
        <path d="M5 13h16a8 8 0 1 0-3 7" stroke="#4cc2f1" strokeWidth="4" />
        <ellipse cx="13" cy="13" rx="13" ry="5" transform="rotate(-40 13 13)" stroke="#f0c030" strokeWidth="1.3" />
      </svg>
    </Slot>
    <Slot>
      <div className="flex h-[24px] w-[24px] items-center justify-center rounded-full bg-[#1a8cf0] pt-[2px] text-[20px] font-bold leading-[20px]">f</div>
    </Slot>
    <Slot>
      <svg width="24" height="26" viewBox="0 0 24 26"><path d="M15 0c3 3 8 8 8 15a11 11 0 0 1-22 0c0-4 1-7 3-8 0 2 1 3 2 3 1-4 5-6 9-10z" fill="#ff9a2e" /><circle cx="12" cy="15" r="9.500" fill="#e8407a" /><circle cx="12" cy="14" r="5" fill="#6a3fb0" /></svg>
    </Slot>
    <Slot>
      <svg width="24" height="20" viewBox="0 0 24 20"><rect width="24" height="20" rx="4" fill="#f00" /><path d="M10 6l5 4-5 4z" fill="#fff" /></svg>
    </Slot>
    <Slot line>
      <svg width="22" height="22" viewBox="0 0 22 22"><path d="M0 0h9l2 3h11v19H0z" fill="#f4c542" /><rect y="3" width="22" height="3" fill="#c89a22" /><path d="M6 22v-6h10v6h-3v-3H9v3z" fill="#2a86c8" /></svg>
    </Slot>
    <Slot line>
      <div className="relative h-[24px] w-[24px] rounded-full bg-[conic-gradient(#ea4335_0_33%,#fbbc05_33%_66%,#34a853_66%_100%)]">
        <div className="absolute left-[7px] top-[7px] h-[10px] w-[10px] rounded-full border border-white bg-[#4285f4]" />
        <div className="absolute -bottom-[3px] -right-[3px] flex h-[14px] w-[14px] items-center justify-center rounded-full bg-[#1d9ad6] text-[8px]">↻</div>
      </div>
    </Slot>
    <Slot active line>
      <div className="flex h-[24px] w-[22px] items-center">
        <div className="flex h-[24px] w-[14px] items-center justify-center bg-[#1f7244] text-[11px] font-bold">X</div>
        <svg width="9" height="16" viewBox="0 0 9 16" fill="none" stroke="#d8f0e0"><path d="M.5.5h8v15h-8zM.5 5h8M.5 10h8M4.500.5v15" /></svg>
      </div>
    </Slot>

    <div className="ml-auto flex items-center pr-[19px] text-[#f0f0f0]">
      <svg width="24" height="18" viewBox="0 0 24 18" fill="none"><path d="M0 9h18M3 13h15M0 5h11" stroke="#8fb0cf" strokeWidth="2" /><circle cx="16" cy="5" r="4" fill="#a9c4dc" /><circle cx="18" cy="13" r="3.500" fill="#8fb0cf" /></svg>
      <span className="ml-[9px] w-[29px] whitespace-nowrap text-[14px]">27°C</span>
      <span className="ml-[9px] w-[42px] text-[14.5px]">Windy</span>
      <svg width="14" height="8" viewBox="0 0 14 8" fill="none" stroke="#fff" strokeWidth="1.3" className="ml-[21px]"><path d="M1 7l6-6 6 6" /></svg>
      <svg width="13" height="17" viewBox="0 0 13 17" fill="none" stroke="#fff" className="ml-[10px]"><path d="M1 4.500h7v8H1zM8 7l4-2v7l-4-2M3 1.500h4M3 15.500h4" /></svg>
      <svg width="16" height="16" viewBox="0 0 16 16" fill="none" stroke="#fff" className="ml-[11px]"><path d="M.5 3l14-2.500V8M.5 3v12.500H9" /><circle cx="13" cy="13" r="3" fill="#2f7fd8" stroke="none" /></svg>
      <svg width="16" height="16" viewBox="0 0 16 16" fill="none" stroke="#fff" className="ml-[7px]"><path d="M.5 1h15v10H.5zM.5 1h6v6h-6zM8 11v4M4 15.500h8" /></svg>
      <svg width="17" height="14" viewBox="0 0 17 14" fill="none" stroke="#fff" className="ml-[8px]"><path d="M.5 4.500h3L8 .5v13l-4.500-4h-3zM10.500 4.500a3.500 3.500 0 0 1 0 5M12.500 2.500a6.500 6.500 0 0 1 0 9" /></svg>
      <span className="ml-[9px] w-[22px] text-[12px]">ENG</span>
      <div className="ml-[12px] w-[60px] pt-[2px] text-center text-[14px] leading-[18px]">
        <div>15:16</div>
        <div className="whitespace-nowrap">26-05-2025</div>
      </div>
      <div className="relative ml-[17px] h-[22px] w-[20px]">
        <svg width="18" height="18" viewBox="0 0 18 18" fill="#fff"><path d="M0 0h18v14H9l-4 4v-4H0z" /><path d="M3 4h12M3 7h12M3 10h8" stroke="#333" /></svg>
        <div className="absolute -bottom-[4px] left-[6px] flex h-[16px] w-[16px] items-center justify-center rounded-full border border-[#888] bg-[#333] text-[12px]">2</div>
      </div>
      <div className="relative ml-[19px] h-[24px] w-[24px]">
        <div className="h-[20px] w-[20px] rounded-[6px] bg-[conic-gradient(#4fb7f0,#6be0a0,#f0d050,#e060c0,#8060e0,#4fb7f0)]" />
        <div className="absolute bottom-0 right-0 bg-[#f5c518] px-[1px] text-[6px] font-bold leading-[8px] text-black">PRE</div>
      </div>
    </div>
  </div>
);

export default function App() {
  return (
    <div className="flex h-[1080px] w-[1920px] flex-col overflow-hidden bg-[#e6e6e6] [font-family:Roboto,sans-serif]">
      <div className="shrink-0 bg-[#217346]">
        <div className="flex h-[35px] items-center">
          <Qat />
          <div className="ml-[479px] w-[560px] whitespace-nowrap text-center text-[11.7px] text-white">
            media_to_upload1747119815 (2) - Excel (Product Activation Failed)
          </div>
          <div className="ml-auto flex items-center pr-[16px] text-white">
            <svg width="14" height="12" viewBox="0 0 14 12" fill="none" stroke="#fff"><path d="M.5.5h13v11H.5zM.5 3h13M7 10V5M5 7l2-2 2 2" /></svg>
            <Minus size={14} className="ml-[33px]" strokeWidth={1.2} />
            <svg width="11" height="11" viewBox="0 0 11 11" fill="none" stroke="#fff" className="ml-[32px]"><path d="M.5 3h7.500v7.500H.5zM3 3V.5h7.500V8H8" /></svg>
            <X size={15} className="ml-[33px]" strokeWidth={1.2} />
          </div>
        </div>
        <div className="flex h-[24px] items-center">
          <Tab w="w-[58px]" t="File" />
          <div className="w-[5px]" />
          <Tab w="w-[60px]" t="Home" active />
          <Tab w="w-[58px]" t="Insert" />
          <Tab w="w-[94px]" t="Page Layout" />
          <Tab w="w-[80px]" t="Formulas" />
          <Tab w="w-[50px]" t="Data" />
          <Tab w="w-[68px]" t="Review" />
          <Tab w="w-[52px]" t="View" />
          <Tab w="w-[74px]" t="Acrobat" />
          <svg width="12" height="16" viewBox="0 0 12 16" fill="none" stroke="#fff" className="ml-[12px]"><path d="M3.500 11C2 9.500 1 8 1 6a5 5 0 0 1 10 0c0 2-1 3.500-2.500 5zM4 13h4M5 15h2" /></svg>
          <span className="ml-[7px] whitespace-nowrap text-[12px] text-white">Tell me what you want to do...</span>
          <span className="ml-auto text-[12px] text-white">Sign in</span>
          <div className="ml-[10px] mr-[16px] flex h-[23px] w-[63px] items-center justify-center gap-[3px] bg-[#185c37] text-[12px] text-white">
            <svg width="16" height="17" viewBox="0 0 16 17" fill="none" stroke="#fff" strokeWidth="1.2">
              <circle cx="7" cy="5" r="4" />
              <path d="M1 16c0-4 2-6 6-6M11 11v5M8.500 13.500h5" />
            </svg>
            Share
          </div>
        </div>
      </div>
      <Ribbon />
      <FormulaBar />
      <Sheet />
      <SheetTabs />
      <StatusBar />
      <Taskbar />
    </div>
  );
}
